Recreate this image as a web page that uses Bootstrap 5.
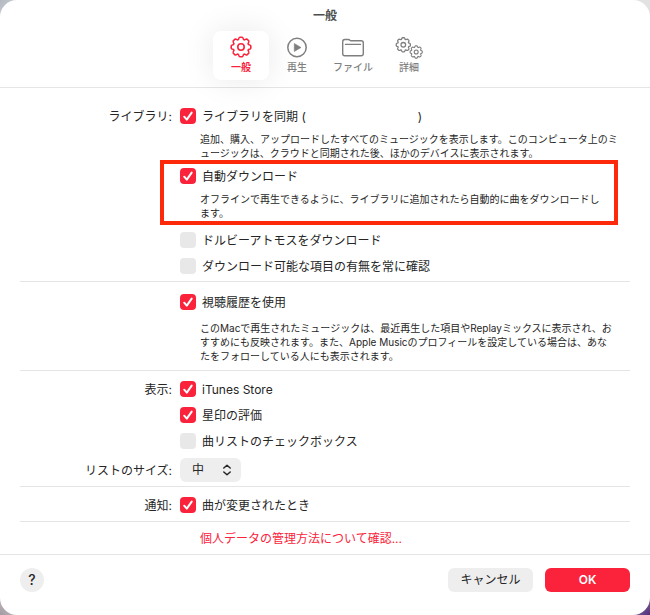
<!DOCTYPE html>
<html lang="ja">
<head>
<meta charset="utf-8">
<meta name="viewport" content="width=device-width, initial-scale=1">
<title>一般</title>
<link href="https://cdn.jsdelivr.net/npm/bootstrap@5.3.0/dist/css/bootstrap.min.css" rel="stylesheet">
<style>
  :root { --accent: #fa233b; --ink: #262626; --line: #e5e5e5; --fill: #eeeeee; }
  body {
    font-family: Inter, "Noto Sans CJK JP", sans-serif;
    font-size: 12px; line-height: 18px; color: var(--ink);
    background:
      radial-gradient(circle at 0 0, #b4b9c1, transparent 40px),
      radial-gradient(circle at 100% 100%, #54307a, transparent 60px),
      radial-gradient(circle at 0 100%, #a39ba3, transparent 40px), #e2e2e2;
  }
  .prefs { background: #fff; border-radius: 17px; overflow: hidden; }
  .prefs-head { border-bottom: 1px solid var(--line); padding-bottom: 7px; }
  .prefs-title { font-size: 12px; line-height: 31px; font-weight: 600; color: #4d4d4d; }
  .pane-tab {
    width: 56px; height: 49px; padding: 4px 0 5px; border: 0; border-radius: 8px;
    background: transparent; color: #7f7f7f; font-size: 10px; line-height: 16px; font-weight: 500;
    white-space: nowrap;
  }
  .pane-tab svg { display: block; margin: 0 auto; }
  .pane-tab.active { color: var(--accent); background: #fff; font-weight: 700; box-shadow: 0 0 32px rgba(0,0,0,.09); }
  .prefs-section { border-bottom: 1px solid var(--line); padding: 7px 0 1px; }
  .prefs-section.first { padding: 15px 0 2px; }
  .prefs-section.display { padding: 5px 0 4px; }
  .prefs-section.notice { padding: 5px 0 3px; }
  .opt { min-height: 26px; gap: 8px; }
  .opt-name { width: 152px; text-align: right; flex: none; }
  .opt-name, .opt-check label { padding-top: 1px; }
  .opt-check { gap: 6px; }
  .opt-check .form-check-input {
    width: 16px; height: 16px; margin: 0; border: 0; border-radius: 4px; background-color: #e8e8e8; flex: none;
  }
  .opt-check .form-check-input:checked {
    background-color: var(--accent);
    background-image: url("data:image/svg+xml,%3Csvg xmlns='http://www.w3.org/2000/svg' viewBox='0 0 16 16'%3E%3Cpath d='M4.2 8.7 6.8 11.6 11.7 4.6' fill='none' stroke='white' stroke-width='2' stroke-linecap='round' stroke-linejoin='round'/%3E%3C/svg%3E");
  }
  .account { display: inline-block; width: 112px; }
  .hint { margin: 3px 0 3px 180px; font-size: 10px; line-height: 14px; }
  .hint.roomy { margin: 6px 0; margin-left: 180px; }
  .marked { position: relative; padding-bottom: 4px; }
  .marked::after { content: ""; position: absolute; inset: -3px 12px 2px 140px; border: 4px solid #fc2a0b; pointer-events: none; }
  .size-pick { position: relative; color: var(--ink); }
  .size-pick .form-select {
    width: 61px; height: 24px; padding: 0 12px; border: 0; border-radius: 6px;
    background: var(--fill); font-size: 12px; line-height: 24px; color: inherit;
  }
  .size-pick svg { position: absolute; right: 9px; top: 6px; pointer-events: none; }
  .privacy { color: var(--accent); text-decoration: none; line-height: 26px; margin-left: 180px; }
  .prefs-foot { border-top: 1px solid var(--line); padding: 13px 20px 23px; gap: 12px; }
  .foot-btn { width: 85px; height: 24px; padding: 0; border: 0; border-radius: 6px; font-size: 12px; line-height: 24px; background: var(--fill); color: var(--ink); }
  .foot-btn.accept { background: var(--accent); color: #fff; font-weight: 600; }
  .help-btn { width: 24px; height: 24px; padding: 0; border: 0; background: var(--fill); font-size: 14px; line-height: 24px; font-weight: 500; color: var(--ink); }
</style>
<script src="https://cdn.jsdelivr.net/npm/bootstrap@5.3.0/dist/js/bootstrap.bundle.min.js"></script>
</head>
<body>
<div class="prefs min-vh-100 d-flex flex-column">
  <header class="prefs-head">
    <h1 class="prefs-title text-center m-0">一般</h1>
    <nav class="d-flex justify-content-center">
      <button type="button" class="pane-tab active">
        <svg width="24" height="24" viewBox="-12 -12 24 24" fill="none" stroke="currentColor" stroke-width="1.6" stroke-linejoin="round">
          <path id="gear" d="M-2.6-7.4Q-1.9-9.8-1.2-9.8H1.2Q1.9-9.8 2.6-7.4L3.4-7.1Q5.6-8.2 6.1-7.8L7.8-6.1Q8.2-5.6 7.1-3.4L7.4-2.6Q9.8-1.9 9.8-1.2V1.2Q9.8 1.9 7.4 2.6L7.1 3.4Q8.2 5.6 7.8 6.1L6.1 7.8Q5.6 8.2 3.4 7.1L2.6 7.4Q1.9 9.8 1.2 9.8H-1.2Q-1.9 9.8-2.6 7.4L-3.4 7.1Q-5.6 8.2-6.1 7.8L-7.8 6.1Q-8.2 5.6-7.1 3.4L-7.4 2.6Q-9.8 1.9-9.8 1.2V-1.2Q-9.8-1.9-7.4-2.6L-7.1-3.4Q-8.2-5.6-7.8-6.1L-6.1-7.8Q-5.6-8.2-3.4-7.1ZM3.2 0A3.2 3.2 0 1 0-3.2 0A3.2 3.2 0 1 0 3.2 0Z"/>
        </svg>一般
      </button>
      <button type="button" class="pane-tab">
        <svg width="24" height="24" viewBox="0 0 24 24" fill="none" stroke="currentColor" stroke-width="1.5">
          <circle cx="12" cy="12.5" r="9.2"/><path d="M9.3 8.5v8l6.7-4Z" fill="currentColor" stroke-width=".6" stroke-linejoin="round"/>
        </svg>再生
      </button>
      <button type="button" class="pane-tab">
        <svg width="24" height="24" viewBox="0 0 24 24" fill="none" stroke="currentColor" stroke-width="1.4" stroke-linejoin="round" stroke-linecap="round">
          <path d="M1.7 18.5V6.7Q1.7 4.5 3.8 4.5H7.2Q8.3 4.5 9 5.3L9.6 5.8H20.2Q22.3 5.8 22.3 7.9V18.5Q22.3 20.7 20.2 20.7H3.8Q1.7 20.7 1.7 18.5ZM4.5 9.4H19.5"/>
        </svg>ファイル
      </button>
      <button type="button" class="pane-tab">
        <svg width="28" height="24" viewBox="0 0 28 24" fill="none" stroke="currentColor" stroke-width="1.8" stroke-linejoin="round">
          <use href="#gear" transform="translate(8.3 9.8) scale(.72)"/>
          <use href="#gear" transform="translate(21.2 17) scale(.62)"/>
        </svg>詳細
      </button>
    </nav>
  </header>

  <main class="flex-grow-1 px-3 mx-1">
    <section class="prefs-section first">
      <div class="opt d-flex align-items-center">
        <span class="opt-name">ライブラリ:</span>
        <div class="opt-check d-flex align-items-center">
          <input class="form-check-input" type="checkbox" id="sync" checked>
          <label for="sync">ライブラリを同期 (<span class="account"></span>)</label>
        </div>
      </div>
      <p class="hint">追加、購入、アップロードしたすべてのミュージックを表示します。このコンピュータ上のミ<br>ュージックは、クラウドと同期された後、ほかのデバイスに表示されます。</p>
      <div class="marked">
        <div class="opt d-flex align-items-center">
          <span class="opt-name"></span>
          <div class="opt-check d-flex align-items-center">
            <input class="form-check-input" type="checkbox" id="auto" checked>
            <label for="auto">自動ダウンロード</label>
          </div>
        </div>
        <p class="hint">オフラインで再生できるように、ライブラリに追加されたら自動的に曲をダウンロードし<br>ます。</p>
      </div>
      <div class="opt d-flex align-items-center">
        <span class="opt-name"></span>
        <div class="opt-check d-flex align-items-center">
          <input class="form-check-input" type="checkbox" id="dolby">
          <label for="dolby">ドルビーアトモスをダウンロード</label>
        </div>
      </div>
      <div class="opt d-flex align-items-center">
        <span class="opt-name"></span>
        <div class="opt-check d-flex align-items-center">
          <input class="form-check-input" type="checkbox" id="available">
          <label for="available">ダウンロード可能な項目の有無を常に確認</label>
        </div>
      </div>
    </section>

    <section class="prefs-section">
      <div class="opt d-flex align-items-center">
        <span class="opt-name"></span>
        <div class="opt-check d-flex align-items-center">
          <input class="form-check-input" type="checkbox" id="history" checked>
          <label for="history">視聴履歴を使用</label>
        </div>
      </div>
      <p class="hint roomy">このMacで再生されたミュージックは、最近再生した項目やReplayミックスに表示され、お<br>すすめにも反映されます。また、Apple Musicのプロフィールを設定している場合は、あな<br>たをフォローしている人にも表示されます。</p>
    </section>

    <section class="prefs-section display">
      <div class="opt d-flex align-items-center">
        <span class="opt-name">表示:</span>
        <div class="opt-check d-flex align-items-center">
          <input class="form-check-input" type="checkbox" id="store" checked>
          <label for="store">iTunes Store</label>
        </div>
      </div>
      <div class="opt d-flex align-items-center">
        <span class="opt-name"></span>
        <div class="opt-check d-flex align-items-center">
          <input class="form-check-input" type="checkbox" id="stars" checked>
          <label for="stars">星印の評価</label>
        </div>
      </div>
      <div class="opt d-flex align-items-center">
        <span class="opt-name"></span>
        <div class="opt-check d-flex align-items-center">
          <input class="form-check-input" type="checkbox" id="boxes">
          <label for="boxes">曲リストのチェックボックス</label>
        </div>
      </div>
      <div class="opt d-flex align-items-center pt-1">
        <label class="opt-name" for="size">リストのサイズ:</label>
        <div class="size-pick">
          <select class="form-select" id="size"><option>小</option><option selected>中</option><option>大</option></select>
          <svg width="10" height="12" viewBox="0 0 10 12" fill="none" stroke="currentColor" stroke-width="1.5" stroke-linecap="round" stroke-linejoin="round"><path d="M1.8 4 5 1.2 8.2 4M1.8 8 5 10.8 8.2 8"/></svg>
        </div>
      </div>
    </section>

    <section class="prefs-section notice">
      <div class="opt d-flex align-items-center">
        <span class="opt-name">通知:</span>
        <div class="opt-check d-flex align-items-center">
          <input class="form-check-input" type="checkbox" id="notify" checked>
          <label for="notify">曲が変更されたとき</label>
        </div>
      </div>
    </section>

    <div class="pt-1"><a class="privacy d-inline-block" href="#">個人データの管理方法について確認...</a></div>
  </main>

  <footer class="prefs-foot d-flex align-items-center">
    <button type="button" class="help-btn rounded-circle me-auto" aria-label="ヘルプ">?</button>
    <button type="button" class="foot-btn">キャンセル</button>
    <button type="button" class="foot-btn accept">OK</button>
  </footer>
</div>
</body>
</html>
